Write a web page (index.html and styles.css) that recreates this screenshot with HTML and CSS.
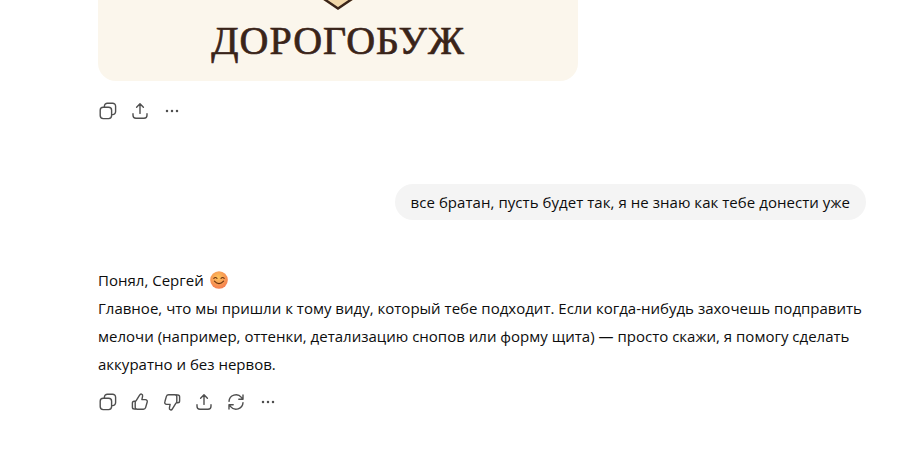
FILE: index.html
```html
<!DOCTYPE html>
<html lang="ru">
<head>
<meta charset="utf-8">
<title>Чат</title>
<link rel="stylesheet" href="styles.css">
</head>
<body>
<main class="thread">
  <section class="image-card">
    <svg class="crest-tip" width="40" height="11" viewBox="0 0 40 11" aria-hidden="true">
      <path d="M5 0 L20 9.5 L35 0 Z" fill="#f2d7a9"/>
      <path d="M6 -1 L20 8.5 L34 -1" fill="none" stroke="#3a2419" stroke-width="2.4"/>
    </svg>
    <div class="card-title">ДОРОГОБУЖ</div>
  </section>
  <div class="actions actions-first">
    <button class="act"><svg viewBox="0 0 20 20"><use href="#i-copy"/></svg></button>
    <button class="act"><svg viewBox="0 0 20 20"><use href="#i-share"/></svg></button>
    <button class="act"><svg viewBox="0 0 20 20"><use href="#i-more"/></svg></button>
  </div>
  <div class="user-row"><div class="bubble">все братан, пусть будет так, я не знаю как тебе донести уже</div></div>
  <div class="answer">
    <p class="greet">Понял, Сергей <svg class="emoji" viewBox="0 0 18 18" aria-hidden="true"><defs><radialGradient id="em" cx="45%" cy="35%" r="70%"><stop offset="0" stop-color="#fdc45c"/><stop offset="1" stop-color="#f4784e"/></radialGradient></defs><circle cx="9" cy="9" r="8.8" fill="url(#em)"/><path d="M3.8 7.4q1.6-1.7 3.2 0M11 7.4q1.6-1.7 3.2 0M4.4 10.2q4.6 4.8 9.2 0" fill="none" stroke="#6b3410" stroke-width="1.1" stroke-linecap="round"/></svg></p>
    <p class="body-text">Главное, что мы пришли к тому виду, который тебе подходит. Если когда-нибудь захочешь подправить мелочи (например, оттенки, детализацию снопов или форму щита) — просто скажи, я помогу сделать аккуратно и без нервов.</p>
  </div>
  <div class="actions actions-second">
    <button class="act"><svg viewBox="0 0 20 20"><use href="#i-copy"/></svg></button>
    <button class="act"><svg viewBox="0 0 20 20"><use href="#i-up"/></svg></button>
    <button class="act"><svg viewBox="0 0 20 20"><use href="#i-down"/></svg></button>
    <button class="act"><svg viewBox="0 0 20 20"><use href="#i-share"/></svg></button>
    <button class="act"><svg viewBox="0 0 20 20"><use href="#i-redo"/></svg></button>
    <button class="act"><svg viewBox="0 0 20 20"><use href="#i-more"/></svg></button>
  </div>
</main>
<svg class="sprite" aria-hidden="true">
  <symbol id="i-copy" viewBox="0 0 20 20"><g fill="none" stroke="#4f4f4f" stroke-width="1.4" stroke-linejoin="round"><rect x="2.2" y="6.2" width="11.4" height="11.4" rx="3"/><path d="M6.4 6.2V5.2a3 3 0 0 1 3-3h5.2a3 3 0 0 1 3 3v5.4a3 3 0 0 1-3 3h-1"/></g></symbol>
  <symbol id="i-share" viewBox="0 0 20 20"><g fill="none" stroke="#4f4f4f" stroke-width="1.4" stroke-linecap="round" stroke-linejoin="round"><path d="M10 12.4V3M6.6 6.3 10 2.8l3.4 3.5M3 12.8v1.5a3 3 0 0 0 3 3h8a3 3 0 0 0 3-3v-1.5"/></g></symbol>
  <symbol id="i-more" viewBox="0 0 20 20"><g fill="#4f4f4f"><circle cx="5" cy="10" r="1.25"/><circle cx="10" cy="10" r="1.25"/><circle cx="15" cy="10" r="1.25"/></g></symbol>
  <symbol id="i-up" viewBox="0 0 20 20"><g fill="none" stroke="#4f4f4f" stroke-width="1.4" stroke-linejoin="round"><path d="M6.2 8.6 9.6 3.2c.5-.9 1.2-1.3 1.9-1.1.9.3 1.3 1.1 1.1 2.1l-.7 3.4h3.5c1.3 0 2.2 1.2 1.8 2.4l-1.6 5.6c-.3 1-1.2 1.6-2.2 1.6H7c-1 0-1.8-.7-1.8-1.7v-5c0-.6.3-1.2 1-1.9z"/><path d="M5.2 9.2H4.2c-1 0-1.8.8-1.8 1.8v4.2c0 1 .8 1.8 1.8 1.8h2.2"/></g></symbol>
  <symbol id="i-down" viewBox="0 0 20 20"><g fill="none" stroke="#4f4f4f" stroke-width="1.4" stroke-linejoin="round"><path d="M13.8 11.4 10.4 16.8c-.5.9-1.2 1.3-1.9 1.1-.9-.3-1.3-1.1-1.1-2.1l.7-3.4H4.6c-1.3 0-2.2-1.2-1.8-2.4l1.6-5.6c.3-1 1.2-1.6 2.2-1.6H13c1 0 1.8.7 1.8 1.7v5c0 .6-.3 1.2-1 1.9z"/><path d="M14.8 10.8h1c1 0 1.8-.8 1.8-1.8V4.8c0-1-.8-1.8-1.8-1.8h-2.2"/></g></symbol>
  <symbol id="i-redo" viewBox="0 0 20 20"><g fill="none" stroke="#4f4f4f" stroke-width="1.4" stroke-linecap="round" stroke-linejoin="round"><path d="M3 9.4A7 7 0 0 1 15.4 5.4L17 7.2M17 3v4.2h-4.2M17 10.6A7 7 0 0 1 4.6 14.6L3 12.8M3 17v-4.2h4.2"/></g></symbol>
</svg>
</body>
</html>
```
FILE: styles.css
```css
* { box-sizing: border-box; }
html, body { margin: 0; height: 465px; overflow: hidden; background: #fff; }
body { font-family: "Open Sans", "Noto Sans", sans-serif; color: #0d0d0d; }
.thread { width: 768px; margin-left: 98px; display: flex; flex-direction: column; }
.image-card { width: 480px; height: 81px; background: #fbf6ec; border-radius: 0 0 18px 18px; display: flex; flex-direction: column; align-items: center; }
.crest-tip { display: block; flex: none; }
.card-title { font-family: "Liberation Serif", serif; font-size: 40px; line-height: 40px; letter-spacing: 1px; color: #3a2419; margin-top: 10px; -webkit-text-stroke: .7px #3a2419; }
.actions { display: flex; height: 20px; gap: 12px; }
.actions-first { margin-top: 20px; }
.act { width: 20px; height: 20px; padding: 0; border: 0; background: none; display: block; }
.act svg { width: 20px; height: 20px; display: block; }
.user-row { display: flex; justify-content: flex-end; margin-top: 63px; }
.bubble { height: 36px; padding: 0 16px; border-radius: 18px; background: #f4f4f4; font-size: 15px; letter-spacing: .05px; line-height: 36px; white-space: nowrap; }
.answer { margin-top: 46px; font-size: 15px; letter-spacing: .01px; line-height: 28px; }
.answer p { margin: 0; }
.emoji { width: 18px; height: 18px; vertical-align: -3px; margin-left: 2px; }
.actions-second { margin-top: 14px; }
.sprite { position: absolute; width: 0; height: 0; }
```
